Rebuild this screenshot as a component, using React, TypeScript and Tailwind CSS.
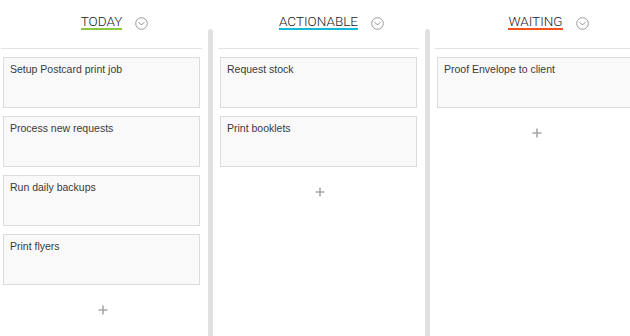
import { Fragment } from 'react'

type Column = { title: string; accent: string; cards: string[] }

const columns: Column[] = [
  {
    title: 'TODAY',
    accent: 'border-[#8dc63f]',
    cards: ['Setup Postcard print job', 'Process new requests', 'Run daily backups', 'Print flyers'],
  },
  { title: 'ACTIONABLE', accent: 'border-[#14b9d5]', cards: ['Request stock', 'Print booklets'] },
  { title: 'WAITING', accent: 'border-[#f4511e]', cards: ['Proof Envelope to client'] },
]

function ChevronCircle() {
  return (
    <svg width="13" height="13" viewBox="0 0 13 13" fill="none">
      <circle cx="6.5" cy="6.5" r="5.8" stroke="#9a9a9a" strokeWidth="1" />
      <path d="M4 5.5 L6.5 8 L9 5.5" stroke="#8a8a8a" strokeWidth="1" strokeLinecap="round" strokeLinejoin="round" />
    </svg>
  )
}

function PlusIcon() {
  return (
    <svg width="10" height="10" viewBox="0 0 10 10">
      <path d="M5 0.5 V9.5 M0.5 5 H9.5" stroke="#a8a8a8" strokeWidth="1.6" />
    </svg>
  )
}

function Lane({ col }: { col: Column }) {
  return (
    <div className="flex w-[201px] shrink-0 flex-col">
      <div className="flex h-[49px] justify-center border-b border-[#e3e3e3] pt-[14px]">
        <span
          className={`relative h-[16px] border-b-2 ${col.accent} text-[13.5px] font-light leading-[14px] text-[#222]`}
          style={{ fontFamily: 'Roboto, "Liberation Sans", sans-serif' }}
        >
          {col.title}
          <span className="absolute left-[calc(100%+13px)] top-[3px]">
            <ChevronCircle />
          </span>
        </span>
      </div>
      <div className="mt-[8px] flex flex-col gap-[8px] px-[2px]">
        {col.cards.map((c) => (
          <div
            key={c}
            className="h-[51px] border border-[#dcdcdc] bg-[#f9f9f9] px-[6px] pt-[5px] text-[10.5px] leading-[13px] text-[#3a3a3a]"
            style={{ fontFamily: '"Liberation Sans", Arial, sans-serif' }}
          >
            {c}
          </div>
        ))}
      </div>
      <div className="mt-[20px] flex justify-center pl-[3px]">
        <PlusIcon />
      </div>
    </div>
  )
}

export default function App() {
  return (
    <div className="flex h-[336px] w-[630px] overflow-hidden bg-white pl-px">
      {columns.map((col, i) => (
        <Fragment key={col.title}>
          <Lane col={col} />
          {i < columns.length - 1 && (
            <div className="ml-[6px] mr-[5px] mt-[29px] w-[5px] shrink-0 rounded-t-[3px] bg-[#e0e0e0]" />
          )}
        </Fragment>
      ))}
    </div>
  )
}
